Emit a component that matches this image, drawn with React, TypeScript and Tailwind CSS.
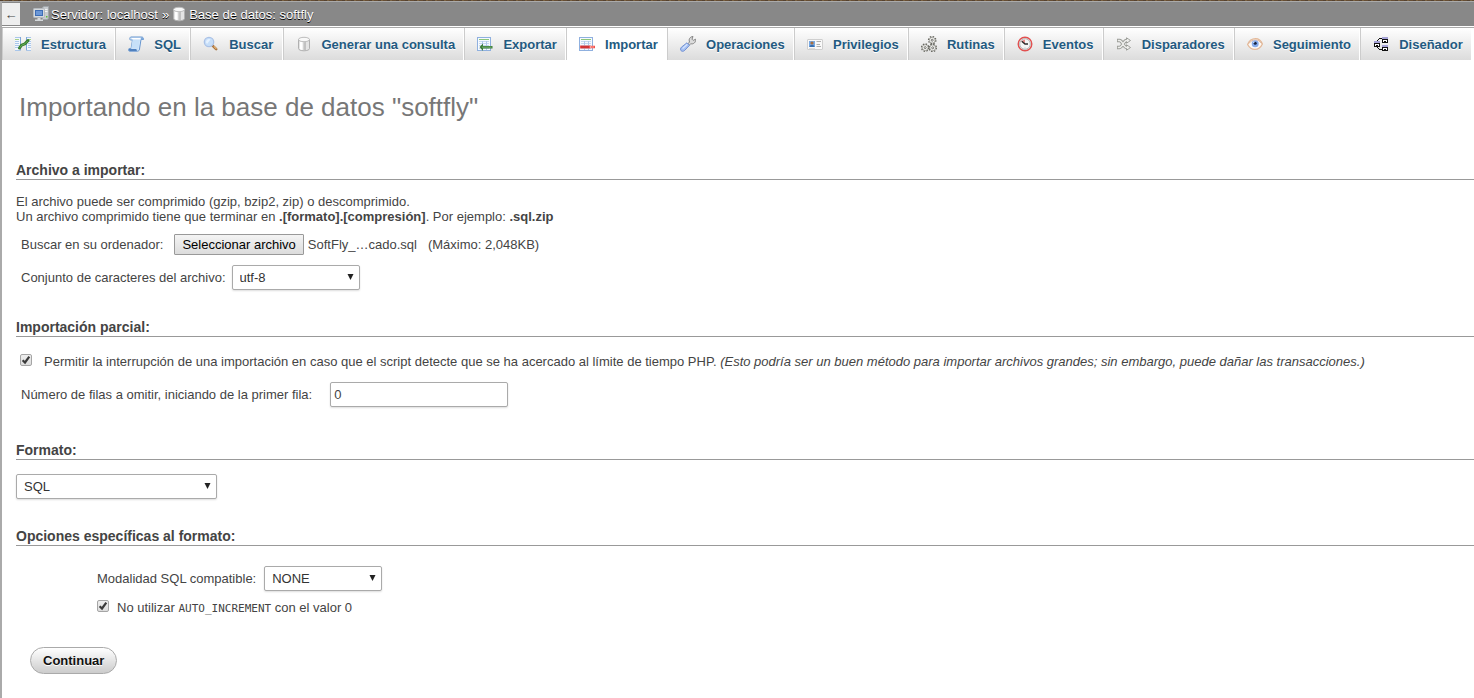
import { useRef, useState } from 'react';
import type { ReactNode } from 'react';

function Icon({ children, crisp = false }: { children: ReactNode; crisp?: boolean }) {
  return (
    <svg
      width="16"
      height="16"
      viewBox="0 0 16 16"
      fill="none"
      aria-hidden="true"
      className="shrink-0"
      shapeRendering={crisp ? 'crispEdges' : 'auto'}
    >
      {children}
    </svg>
  );
}

function ServerIcon() {
  return (
    <Icon>
      <path d="M9.500 1.500 11 .5h4.500v12l-1.500 1H9.500z" fill="#c9cdd0" stroke="#a0a5a9" />
      <path d="M11 3.500h3.500M11 5.500h3.500" stroke="#f4f6f7" />
      <rect x="13" y="10" width="1.500" height="1.500" fill="#5bbf3a" />
      <rect x="0.500" y="2.500" width="11" height="9" rx="0.800" fill="#d5d9dc" stroke="#b4b9be" />
      <rect x="2" y="4" width="8" height="6" fill="#3d6db5" />
      <path d="M3 5h6v4H3z" fill="#6b97d6" />
      <path d="M4.500 12h3v1.500H10V15H2v-1.500h2.500z" fill="#d5d9dc" />
    </Icon>
  );
}

function DatabaseIcon() {
  return (
    <Icon>
      <path d="M2.500 3.500v9c0 1.300 2.300 2.300 5.500 2.300s5.500-1 5.500-2.300v-9z" fill="#e4e4e4" stroke="#b0b0b0" />
      <path d="M4 5.500v7.800c.8.500 1.700.6 2.500.7V6z" fill="#fff" />
      <path d="M7.500 6.200v8c1 0 2-.1 2.500-.2V6z" fill="#c2c2c2" />
      <ellipse cx="8" cy="3.500" rx="5.500" ry="2.200" fill="#f8f8f8" stroke="#bdbdbd" />
    </Icon>
  );
}

function StructureIcon() {
  return (
    <Icon>
      <path d="M0 1h5.500v13.500H0zM12 1h4v13.500h-4z" fill="#f2f7fd" />
      <path d="M5.500 1v13.500M11.500 1v13.500" stroke="#7ea7da" />
      <path d="M0 1.500h5M0 5.500h4M0 7.500h4M0 9.500h4M0 11.500h4M0 14.500h5M12 1.500h4M13 5.500h3M13 7.500h3M13 9.500h3M13 11.500h3M12 14.500h4" stroke="#a9c6ea" />
      <path d="M0 3.500h4M13 3.500h3" stroke="#a5d088" />
      <path d="M4.500 12 6.500 9.200l3.500-1.400 3-3.300" stroke="#357c2f" strokeWidth="3" strokeLinecap="round" />
      <path d="M4.800 11.600 6.700 9.200l3.300-1.400 2.700-2.900" stroke="#6aae56" />
    </Icon>
  );
}

function SqlIcon() {
  return (
    <Icon>
      <path d="M3 1h10.500c1.500 0 2 1 2 2.500H13L11.500 13c-.2 1.500-1 2.200-2 2.200H1.500c-1 0-1.200-1.400-.6-2.500h2.200L4.500 4H2.500C1.500 4 1.500 1 3 1z" fill="#dcebfb" stroke="#6796cf" />
      <path d="M4.500 4 3.100 12.700h5.400c.8 0 .2 2 1.500 1.900L12 4z" fill="#c7e0f8" />
      <path d="M4 2.500h8" stroke="#fff" />
      <path d="M1 13h7.500c0 1 .3 2 1 2H2c-1 0-1.300-1-1-2z" fill="#4f80be" />
      <path d="M13 3.500h2.500C15.500 2 15 1 13.700 1 13 1 13 2 13 3.500z" fill="#80aadb" />
    </Icon>
  );
}

function SearchIcon() {
  return (
    <Icon>
      <path d="m9.800 9.800 3.400 3.400" stroke="#a8733f" strokeWidth="2.600" strokeLinecap="round" />
      <path d="m10.800 10.300 2.600 2.600" stroke="#e6b678" strokeWidth="1.200" />
      <circle cx="6" cy="6" r="4.700" fill="#c6def9" stroke="#abc2e6" strokeWidth="1.300" />
      <path d="M3 6.300A3 3 0 0 1 7.500 3.500L4 8z" fill="#e6f2ff" />
    </Icon>
  );
}

function TableArrowIcon({ direction }: { direction: 'export' | 'import' }) {
  return (
    <Icon crisp>
      <rect x="0.500" y="1.500" width="13" height="13" fill="#f6faff" stroke="#8fb0df" />
      <rect x="2" y="3" width="10" height="1" fill="#8cc67a" />
      <path d="M2 5.500h10M2 7.500h10M2 9.500h10M2 12.500h10" stroke="#c6d8f0" />
      <path d="M5.500 5v9M9.500 5v9" stroke="#b1c9ea" />
      {direction === 'export' ? (
        <g shapeRendering="auto">
          <path d="M2.500 11 6 7.500V10h9.500v2.500H6V15z" fill="#3b7d38" />
          <path d="M5 11.200h9.500" stroke="#74ad6c" />
        </g>
      ) : (
        <g shapeRendering="auto">
          <path d="M1 9.500h10.500V12.500H1z" fill="#ef5350" />
          <path d="M2 11h8" stroke="#b3191f" />
          <path d="M12 8v1.800h4v2.400h-4V14z" fill="#f0504d" />
          <path d="M11 11h4" stroke="#ff9c91" />
        </g>
      )}
    </Icon>
  );
}

function WrenchIcon() {
  return (
    <Icon>
      <path d="M7.500 8.200 9.500 6C8.500 3.300 9.800.8 13 .5L12 3.200l1.200 1.200 2.500-1.200c.3 3.200-2.300 5.300-5 4.500L8.800 9.700z" fill="#dcdcdc" stroke="#858585" />
      <path d="M7 6.800 9.500 9.300l-4.700 5c-1.200 1.300-2.900 1.200-3.700.4-.9-.9-.7-2.500.4-3.600z" fill="#a6c1f2" stroke="#7392d3" />
      <path d="m2.600 12.600 4.600-4.300" stroke="#d8e5ff" strokeWidth="1.200" />
    </Icon>
  );
}

function PrivilegesIcon() {
  return (
    <Icon>
      <rect x="0.500" y="3.500" width="15" height="10" rx="0.500" fill="#f9f9f9" stroke="#cfcfcf" />
      <rect x="2" y="5" width="6" height="6" fill="#79aae4" />
      <circle cx="5" cy="7" r="1.600" fill="#a9703f" />
      <path d="M2.500 11c.3-2 1.300-2 2.500-2s2.200 0 2.500 2z" fill="#376eaf" />
      <path d="M9.500 5.500H14M9.500 8.500H13M9.500 10.500H14" stroke="#b0b0b0" />
      <path d="M2 12.500h6" stroke="#ddd" />
    </Icon>
  );
}

function Gear({ x, y }: { x: number; y: number }) {
  return (
    <g>
      <circle cx={x} cy={y} r="3.600" stroke="#66665f" strokeWidth="1.400" strokeDasharray="1.500 1.327" />
      <circle cx={x} cy={y} r="2.900" fill="#f4f4f2" stroke="#77776f" strokeWidth="0.600" />
      <circle cx={x} cy={y} r="1" fill="#fff" stroke="#55554f" strokeWidth="0.800" />
    </g>
  );
}

function RoutinesIcon() {
  return (
    <Icon>
      <Gear x={11.2} y={4.2} />
      <Gear x={4.2} y={11.600} />
      <Gear x={11.700} y={11.800} />
    </Icon>
  );
}

function ClockIcon() {
  return (
    <Icon>
      <circle cx="8" cy="8" r="6.800" fill="#eee" stroke="#e25050" strokeWidth="1.400" />
      <circle cx="8" cy="8" r="5.300" fill="#f5f5f5" stroke="#b5b5b5" />
      <path d="M8 8V3.500A4.500 4.500 0 0 0 4.300 5.800z" fill="#e68b8b" />
      <path d="M4.800 5.200 8 8h3" stroke="#2b2b2b" strokeWidth="1.300" />
      <path d="M8 11.500v1" stroke="#bbb" />
    </Icon>
  );
}

function ShuffleIcon() {
  return (
    <Icon>
      <path d="M1 4.500h2.500c3 0 4 7 7 7H12M1 11.500h2.500c3 0 4-7 7-7H12" stroke="#9b9d98" strokeWidth="3.400" />
      <path d="M10.500 1.800 14.500 4.500l-4 2.700zM10.500 8.800l4 2.700-4 2.700z" fill="#eeeeec" stroke="#9b9d98" />
      <path d="M1.800 4.500h1.700c3 0 4 7 7 7H13M1.800 11.500h1.700c3 0 4-7 7-7H13" stroke="#eeeeec" strokeWidth="1.500" />
    </Icon>
  );
}

function EyeIcon() {
  return (
    <Icon>
      <path d="M.6 8.500C2.500 4 5.500 2.700 8.500 2.700s5.500 1.800 6.900 5.300C13.500 12 11 13.400 8 13.400S2.500 12 .6 8.500z" fill="#fdf9f5" stroke="#e3b898" strokeWidth="1.300" />
      <path d="M2 7.500C4 4.500 6 4 8.500 4S13 5 14.300 7.300" stroke="#cf9c7b" strokeWidth="0.700" />
      <circle cx="8.200" cy="7.800" r="3.500" fill="#86abec" />
      <circle cx="8.200" cy="7.300" r="1.500" fill="#16233f" />
      <circle cx="6.800" cy="6.300" r="0.700" fill="#dce9ff" />
    </Icon>
  );
}

function DesignerIcon() {
  return (
    <Icon crisp>
      <path d="M9 1h6v2H9zM9 9h6v2H9zM1 5h6v2H1z" fill="#a5a2d6" />
      <path d="M9.500 3.500h5v3h-5zM9.500 11.500h5v3h-5zM1.500 7.500h5v3h-5z" fill="#fff" stroke="#111" />
      <path d="M11 5h2M11 13h2M3 9h2" stroke="#111" strokeWidth="1" />
      <path d="M4 4h1v1H4zM5 3h1v1H5zM6 2h3v1H6zM4 11h1v1H4zM5 12h1v1H5zM6 13h3v1H6z" fill="#111" />
    </Icon>
  );
}

const tabs: { label: string; icon: ReactNode }[] = [
  { label: 'Estructura', icon: <StructureIcon /> },
  { label: 'SQL', icon: <SqlIcon /> },
  { label: 'Buscar', icon: <SearchIcon /> },
  { label: 'Generar una consulta', icon: <DatabaseIcon /> },
  { label: 'Exportar', icon: <TableArrowIcon direction="export" /> },
  { label: 'Importar', icon: <TableArrowIcon direction="import" /> },
  { label: 'Operaciones', icon: <WrenchIcon /> },
  { label: 'Privilegios', icon: <PrivilegesIcon /> },
  { label: 'Rutinas', icon: <RoutinesIcon /> },
  { label: 'Eventos', icon: <ClockIcon /> },
  { label: 'Disparadores', icon: <ShuffleIcon /> },
  { label: 'Seguimiento', icon: <EyeIcon /> },
  { label: 'Diseñador', icon: <DesignerIcon /> },
];

function SelectBox({ id, label, options, width }: { id: string; label?: string; options: string[]; width: string }) {
  return (
    <div className={`relative ${width}`}>
      <select
        id={id}
        aria-label={label}
        className="h-[25px] w-full appearance-none rounded-xs border border-[#aaa] bg-white pl-[7px] text-[13px] leading-[15px] text-[#333] shadow-[0_1px_2px_#ddd]"
      >
        {options.map((option) => (
          <option key={option}>{option}</option>
        ))}
      </select>
      <svg width="7" height="6" viewBox="0 0 7 6" aria-hidden="true" className="pointer-events-none absolute top-[9px] right-1.5">
        <path d="M.5 0h6L3.500 6z" fill="#222" />
      </svg>
    </div>
  );
}

function CheckBox({ id }: { id: string }) {
  return (
    <span className="relative flex size-3 shrink-0">
      <input
        id={id}
        type="checkbox"
        defaultChecked
        className="peer size-3 appearance-none rounded-xs border border-[#a5a5a5] bg-linear-to-b from-[#eee] to-[#ddd]"
      />
      <svg width="12" height="12" viewBox="0 0 12 12" fill="none" aria-hidden="true" className="pointer-events-none absolute inset-0 hidden peer-checked:block">
        <path d="M2.600 6.200 5 8.500 9.300 2.600" stroke="#3a3a3a" strokeWidth="2.200" />
      </svg>
    </span>
  );
}

function SectionTitle({ children }: { children: ReactNode }) {
  return <h2 className="border-b border-[#999] text-[14px] leading-[17px] font-bold">{children}</h2>;
}

export default function App() {
  const fileInput = useRef<HTMLInputElement>(null);
  const [fileName, setFileName] = useState('SoftFly_…cado.sql');

  return (
    <div className="flex min-h-screen flex-col overflow-x-hidden bg-white font-['Liberation_Sans',Arial,sans-serif] text-[13px] leading-[15px] text-[#444]">
      <div className="h-px bg-[repeating-linear-gradient(90deg,#54412f_0_3px,#78603f_3px_5px,#654c32_5px_9px)]" />
      <div className="flex grow flex-col border-t border-l-2 border-t-[#aaa] border-l-[#aaa]">
        <header className="flex h-6 items-center bg-[#888] text-white [text-shadow:0_1px_0_#000]">
          <button type="button" aria-label="Ocultar panel" className="h-[22px] w-[18px] bg-[#eee] text-center text-[13px] text-[#444] [text-shadow:none]">
            ←
          </button>
          <nav aria-label="Ruta" className="ml-[13px] flex items-center">
            <ServerIcon />
            <a href="#servidor" className="ml-0.5">Servidor: localhost</a>
            <span className="mr-0.5 ml-1">»</span>
            <DatabaseIcon />
            <a href="#base" className="ml-0.5">Base de datos: softfly</a>
          </nav>
        </header>
        <nav aria-label="Secciones" className="mt-px flex overflow-hidden border-t border-[#aaa] pr-0.5">
          {tabs.map(({ label, icon }) => (
            <a
              key={label}
              href={`#${label}`}
              aria-current={label === 'Importar' ? 'page' : undefined}
              className="flex h-8 shrink-0 grow items-center gap-2.5 border-r border-l border-r-white border-l-[#ccc] bg-linear-to-b from-white to-[#dcdcdc] pr-2 pl-3 font-bold whitespace-nowrap text-[#235a81] [text-shadow:0_1px_0_#fff] aria-[current=page]:bg-white aria-[current=page]:bg-none"
            >
              {icon}
              {label}
            </a>
          ))}
        </nav>

        <main className="pt-8 pl-3.5">
          <h1 className="pl-[3px] text-[26px] leading-[30px] text-[#777]">Importando en la base de datos "softfly"</h1>

          <form className="pt-10" onSubmit={(event) => event.preventDefault()}>
            <section>
              <SectionTitle>Archivo a importar:</SectionTitle>
              <p className="mt-3.5">
                El archivo puede ser comprimido (gzip, bzip2, zip) o descomprimido.
                <br />
                Un archivo comprimido tiene que terminar en <b>.[formato].[compresión]</b>. Por ejemplo: <b>.sql.zip</b>
              </p>
              <div className="mt-2.5 flex h-[21px] items-center pl-[5px]">
                <label htmlFor="archivo">Buscar en su ordenador:</label>
                <input
                  id="archivo"
                  ref={fileInput}
                  type="file"
                  className="hidden"
                  onChange={(event) => setFileName(event.target.files?.[0]?.name ?? fileName)}
                />
                <button
                  type="button"
                  onClick={() => fileInput.current?.click()}
                  className="ml-[11px] h-[21px] rounded-[1px] border border-[#999] bg-linear-to-b from-[#f4f4f4] to-[#dcdcdc] px-[7px] text-black"
                >
                  Seleccionar archivo
                </button>
                <span className="ml-1">{fileName}</span>
                <span className="ml-[11px]">(Máximo: 2,048KB)</span>
              </div>
              <div className="mt-2.5 flex items-center gap-1.5 pl-[5px]">
                <label htmlFor="juego">Conjunto de caracteres del archivo:</label>
                <SelectBox id="juego" options={['utf-8', 'iso-8859-1', 'windows-1252']} width="w-32" />
              </div>
            </section>

            <section className="mt-[29px]">
              <SectionTitle>Importación parcial:</SectionTitle>
              <div className="mt-[17px] flex items-start gap-3 pl-1">
                <CheckBox id="interrupcion" />
                <label htmlFor="interrupcion">
                  Permitir la interrupción de una importación en caso que el script detecte que se ha acercado al límite de tiempo PHP.{' '}
                  <i>(Esto podría ser un buen método para importar archivos grandes; sin embargo, puede dañar las transacciones.)</i>
                </label>
              </div>
              <div className="mt-[13px] flex items-center gap-[18px] pl-[5px]">
                <label htmlFor="omitir">Número de filas a omitir, iniciando de la primer fila:</label>
                <input
                  id="omitir"
                  type="text"
                  defaultValue="0"
                  className="h-[25px] w-[178px] rounded-xs border border-[#aaa] bg-white px-[3px] shadow-[0_1px_2px_#ddd]"
                />
              </div>
            </section>

            <section className="mt-[35px]">
              <SectionTitle>Formato:</SectionTitle>
              <div className="mt-3.5">
                <SelectBox id="formato" label="Formato" options={['SQL', 'CSV', 'XML']} width="w-[201px]" />
              </div>
            </section>

            <section className="mt-[29px]">
              <SectionTitle>Opciones específicas al formato:</SectionTitle>
              <div className="mt-5 pl-[81px]">
                <div className="flex items-center gap-2">
                  <label htmlFor="modalidad">Modalidad SQL compatible:</label>
                  <SelectBox id="modalidad" options={['NONE', 'ANSI', 'DB2', 'ORACLE', 'TRADITIONAL']} width="w-[118px]" />
                </div>
                <div className="mt-[9px] flex items-start gap-2">
                  <CheckBox id="autoinc" />
                  <label htmlFor="autoinc">
                    No utilizar <code className="font-['DejaVu_Sans_Mono',monospace] text-[11px] leading-none">AUTO_INCREMENT</code> con el valor 0
                  </label>
                </div>
              </div>
            </section>

            <button
              type="submit"
              className="mt-8 ml-3.5 h-[27px] rounded-full border border-[#aaa] bg-linear-to-b from-white to-[#ccc] px-3 font-bold text-[#111] [text-shadow:0_1px_0_#fff]"
            >
              Continuar
            </button>
          </form>
        </main>
      </div>
    </div>
  );
}
